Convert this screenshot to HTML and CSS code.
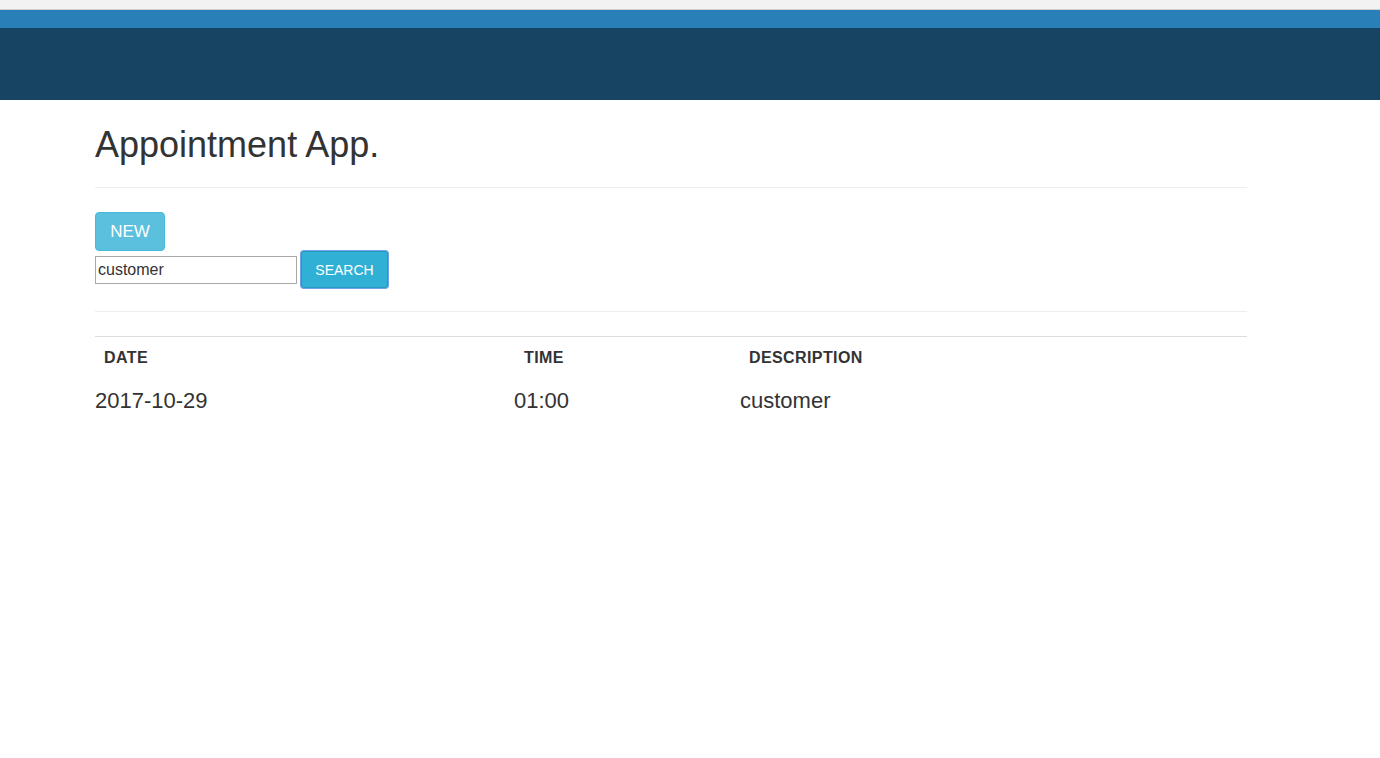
FILE: index.html
```html
<!DOCTYPE html>
<html>
<head>
<meta charset="utf-8">
<link rel="stylesheet" href="styles.css">
</head>
<body>
<div class="topstrip"></div>
<div class="bluebar"></div>
<div class="navbar"></div>
<div class="container">
  <h1 class="title">Appointment App.</h1>
  <hr class="rule first">
  <div class="actions">
    <button class="btn btn-new">NEW</button>
    <div class="search-row">
      <input class="search-input" type="text" value="customer">
      <button class="btn btn-search">SEARCH</button>
    </div>
  </div>
  <hr class="rule second">
  <div class="table">
    <div class="row head">
      <div class="cell c1">DATE</div>
      <div class="cell c2">TIME</div>
      <div class="cell c3">DESCRIPTION</div>
    </div>
    <div class="row data">
      <div class="cell c1">2017-10-29</div>
      <div class="cell c2">01:00</div>
      <div class="cell c3">customer</div>
    </div>
  </div>
</div>
</body>
</html>
```
FILE: styles.css
```css
* { box-sizing: border-box; }
body {
  margin: 0;
  font-family: "Liberation Sans", Arial, sans-serif;
  color: #333;
  background: #fff;
}
.topstrip {
  height: 10px;
  background: #f2f2f2;
  border-bottom: 1px solid #cfcfcf;
}
.bluebar {
  height: 18px;
  background: #2980b9;
}
.navbar {
  height: 72px;
  background: #174463;
}
.container {
  width: 1152px;
  margin-left: 95px;
}
.title {
  margin: 0;
  padding-top: 23px;
  font-size: 36px;
  font-weight: 400;
  line-height: 44px;
  color: #333;
}
.rule {
  border: 0;
  border-top: 1px solid #eee;
  margin: 0;
}
.rule.first { margin-top: 20px; }
.actions {
  padding-top: 24px;
  display: flex;
  flex-direction: column;
  align-items: flex-start;
}
.btn {
  font-family: "Liberation Sans", Arial, sans-serif;
  color: #fff;
  cursor: pointer;
}
.btn-new {
  width: 70px;
  height: 39px;
  background: #5bc0de;
  border: 1px solid #46b8da;
  border-radius: 4px;
  font-size: 17px;
  padding: 0;
}
.search-row {
  display: flex;
  align-items: center;
  margin-top: 0;
}
.search-input {
  width: 202px;
  height: 28px;
  margin: 0;
  border: 1px solid #a9a9a9;
  padding: 1px 2px;
  font-family: "Liberation Sans", Arial, sans-serif;
  font-size: 16px;
  color: #333;
}
.btn-search {
  margin-left: 4px;
  width: 87px;
  height: 37px;
  background: #31b0d5;
  border: 1px solid #269abc;
  border-radius: 3px;
  box-shadow: 0 0 0 1px #6fa3e8;
  font-size: 14px;
  padding: 0;
}
.rule.second { margin-top: 23px; }
.table {
  margin-top: 24px;
  border-top: 1px solid #ddd;
}
.row {
  display: grid;
  grid-template-columns: 419px 226px 1fr;
}
.head {
  font-size: 16px;
  font-weight: 700;
  letter-spacing: 0.4px;
  line-height: 18px;
  padding-top: 12px;
}
.head .cell { padding-left: 9px; }
.head .c2 { padding-left: 10px; }
.data {
  font-size: 22px;
  line-height: 26px;
  padding-top: 21px;
}
```
